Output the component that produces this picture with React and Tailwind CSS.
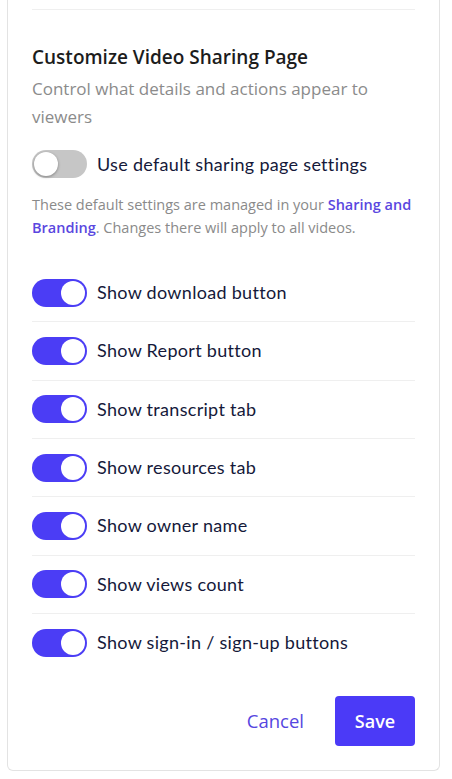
import React, { useState } from 'react';

const options = [
  'Show download button',
  'Show Report button',
  'Show transcript tab',
  'Show resources tab',
  'Show owner name',
  'Show views count',
  'Show sign-in / sign-up buttons',
];

function Toggle({ on, onClick }) {
  return (
    <button
      type="button"
      onClick={onClick}
      className={`relative shrink-0 w-[55px] h-[28px] rounded-full transition-colors ${on ? 'bg-[#4b3df5]' : 'bg-[#c6c6c6]'}`}
    >
      <span
        className={`absolute top-[2px] w-[24px] h-[24px] rounded-full bg-white transition-all ${on ? 'left-[29px]' : 'left-[2px] shadow-[0_1px_3px_rgba(0,0,0,0.35)]'}`}
      />
    </button>
  );
}

export default function App() {
  const [useDefault, setUseDefault] = useState(false);
  const [values, setValues] = useState(options.map(() => true));

  const flip = (i) => setValues(values.map((v, j) => (j === i ? !v : v)));

  return (
    <div className="min-h-screen bg-white pl-[7px] pr-[12px] pb-[7px]" style={{ fontFamily: '"Open Sans", "Liberation Sans", sans-serif' }}>
      <div className="border-x border-b border-[#e3e3e3] rounded-b-[6px] bg-white px-6 pb-[24px]">
        <div className="h-[10px] border-b border-[#efefef]" />

        <h2 className="mt-[35px] text-[19px] leading-[24px] font-semibold text-[#1c1c1c]">
          Customize Video Sharing Page
        </h2>
        <p className="mt-[6px] text-[17px] leading-[28px] text-[#8b8b8b] pr-6">
          Control what details and actions appear to viewers
        </p>

        <div className="mt-[19px] flex items-center gap-[10px]">
          <Toggle on={useDefault} onClick={() => setUseDefault(!useDefault)} />
          <span className="text-[18px] tracking-[0.3px] text-[#15193a]" style={{ fontFamily: 'Lato, "Noto Sans", sans-serif' }}>
            Use default sharing page settings
          </span>
        </div>

        <p className="mt-[15px] text-[14.5px] leading-[23px] text-[#8a8a8a]">
          These default settings are managed in your{' '}
          <a href="#" className="text-[#5a47e0] font-semibold">Sharing and Branding</a>. Changes there will apply to all videos.
        </p>

        <div className="mt-[25px]">
          {options.map((label, i) => (
            <div
              key={label}
              className={`flex items-center gap-[10px] py-[14.67px] ${i < options.length - 1 ? 'border-b border-[#efefef]' : ''}`}
            >
              <Toggle on={values[i]} onClick={() => flip(i)} />
              <span className="text-[18px] tracking-[0.3px] text-[#15193a]" style={{ fontFamily: 'Lato, "Noto Sans", sans-serif' }}>
                {label}
              </span>
            </div>
          ))}
        </div>

        <div className="mt-[25px] flex items-center justify-end gap-[31px]">
          <button type="button" className="text-[18.5px] text-[#5546e0]">Cancel</button>
          <button type="button" className="w-[80px] h-[50px] rounded-[4px] bg-[#4b3af7] text-white text-[18px] font-semibold">
            Save
          </button>
        </div>
      </div>
    </div>
  );
}
